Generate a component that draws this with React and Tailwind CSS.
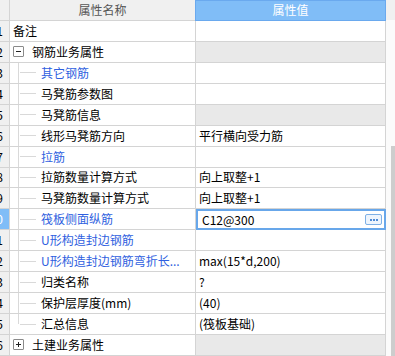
import React from "react";

const rows = [
  { n: 1, name: "备注", type: "top" },
  { n: 2, name: "钢筋业务属性", type: "group", open: true },
  { n: 3, name: "其它钢筋", blue: true },
  { n: 4, name: "马凳筋参数图" },
  { n: 5, name: "马凳筋信息", grayVal: true },
  { n: 6, name: "线形马凳筋方向", value: "平行横向受力筋" },
  { n: 7, name: "拉筋", blue: true },
  { n: 8, name: "拉筋数量计算方式", value: "向上取整+1" },
  { n: 9, name: "马凳筋数量计算方式", value: "向上取整+1" },
  { n: 10, name: "筏板侧面纵筋", blue: true, value: "C12@300", edit: true },
  { n: 11, name: "U形构造封边钢筋", blue: true },
  { n: 12, name: "U形构造封边钢筋弯折长...", blue: true, value: "max(15*d,200)" },
  { n: 13, name: "归类名称", value: "?" },
  { n: 14, name: "保护层厚度(mm)", value: "(40)" },
  { n: 15, name: "汇总信息", value: "(筏板基础)", last: true },
  { n: 16, name: "土建业务属性", type: "group", open: false },
];

function Box({ open }) {
  return (
    <div className="relative flex items-center justify-center w-[11px] h-[11px] border border-[#8a8a8a] rounded-[1px] bg-white shrink-0">
      <div className="w-[5px] h-px bg-[#222]" />
      {!open && <div className="absolute w-px h-[5px] bg-[#222]" />}
    </div>
  );
}

function Tree({ last }) {
  return (
    <div className="flex self-stretch pl-[8px] shrink-0">
      <div className="flex flex-col w-px">
        <div className="flex-1 bg-[#d9d9d9]" />
        <div className={last ? "flex-1" : "flex-1 bg-[#d9d9d9]"} />
      </div>
      <div className="flex items-center ml-px">
        <div className="w-[16px] h-px bg-[#d9d9d9]" />
      </div>
    </div>
  );
}

function Row({ r }) {
  const numCls = r.edit
    ? "bg-[#80bdf7] text-white"
    : "bg-[#f0f0f0] text-black";
  return (
    <div className="flex h-[21px]">
      <div
        className={`flex justify-end items-center overflow-hidden w-[10px] pr-[6px] border-r border-b border-[#d4d4d4] ${numCls}`}
      >
        <span className="whitespace-nowrap">{r.n}</span>
      </div>
      <div className="flex items-center w-[186px] border-r border-b border-[#d4d4d4] bg-white overflow-hidden">
        {r.type === "top" && <span className="pl-[3px] text-black">{r.name}</span>}
        {r.type === "group" && (
          <>
            <div className="pl-[3px]">
              <Box open={r.open} />
            </div>
            <span className="ml-[8px] text-black">{r.name}</span>
          </>
        )}
        {!r.type && (
          <>
            <Tree last={r.last} />
            <span
              className={`ml-[5px] whitespace-nowrap ${r.blue ? "text-[#2f5fe0]" : "text-black"}`}
            >
              {r.name}
            </span>
          </>
        )}
      </div>
      {r.edit ? (
        <div className="flex items-center w-[190px] border-2 border-[#68a7ea] bg-white">
          <span className="pl-[4px] flex-1 text-black">{r.value}</span>
          <div className="flex items-center justify-center gap-[1px] w-[17px] h-[11px] mr-[2px] border border-[#7eb0e6] rounded-[2px] bg-[#eef5fd]">
            <div className="w-[2px] h-[2px] bg-[#4f8bd6]" />
            <div className="w-[2px] h-[2px] bg-[#4f8bd6]" />
            <div className="w-[2px] h-[2px] bg-[#4f8bd6]" />
          </div>
        </div>
      ) : (
        <div
          className={`flex items-center w-[190px] border-r border-b border-[#d4d4d4] ${
            r.type === "group" || r.grayVal ? "bg-[#e9e9e9]" : "bg-white"
          }`}
        >
          <span className="pl-[3px] text-black whitespace-nowrap">{r.value}</span>
        </div>
      )}
    </div>
  );
}

export default function App() {
  return (
    <div
      className="flex w-[395px] h-[356px] overflow-hidden bg-white text-[12px] leading-none"
      style={{ fontFamily: '"Noto Sans CJK SC", "Noto Sans", sans-serif' }}
    >
      <div className="flex flex-col w-[386px] shrink-0">
        <div className="flex h-[21px]">
          <div className="w-[10px] bg-[#f0f0f0] border-r border-b border-[#d4d4d4]" />
          <div className="flex items-center justify-center w-[185px] bg-[#f0f0f0] border-b border-[#d4d4d4] text-[#555]">
            属性名称
          </div>
          <div className="flex items-center justify-center w-[191px] bg-[#80bdf7] border border-[#6aa9ee] text-white">
            属性值
          </div>
        </div>
        {rows.map((r) => (
          <Row key={r.n} r={r} />
        ))}
      </div>
      <div className="flex flex-col w-[9px] shrink-0 bg-[#fbfbfb]">
        <div className="h-[20px] shrink-0 bg-[#f0f0f0]" />
        <div className="h-[126px] shrink-0" />
        <div className="flex-1 ml-[5px] bg-[#cdcdcd]" />
      </div>
    </div>
  );
}
